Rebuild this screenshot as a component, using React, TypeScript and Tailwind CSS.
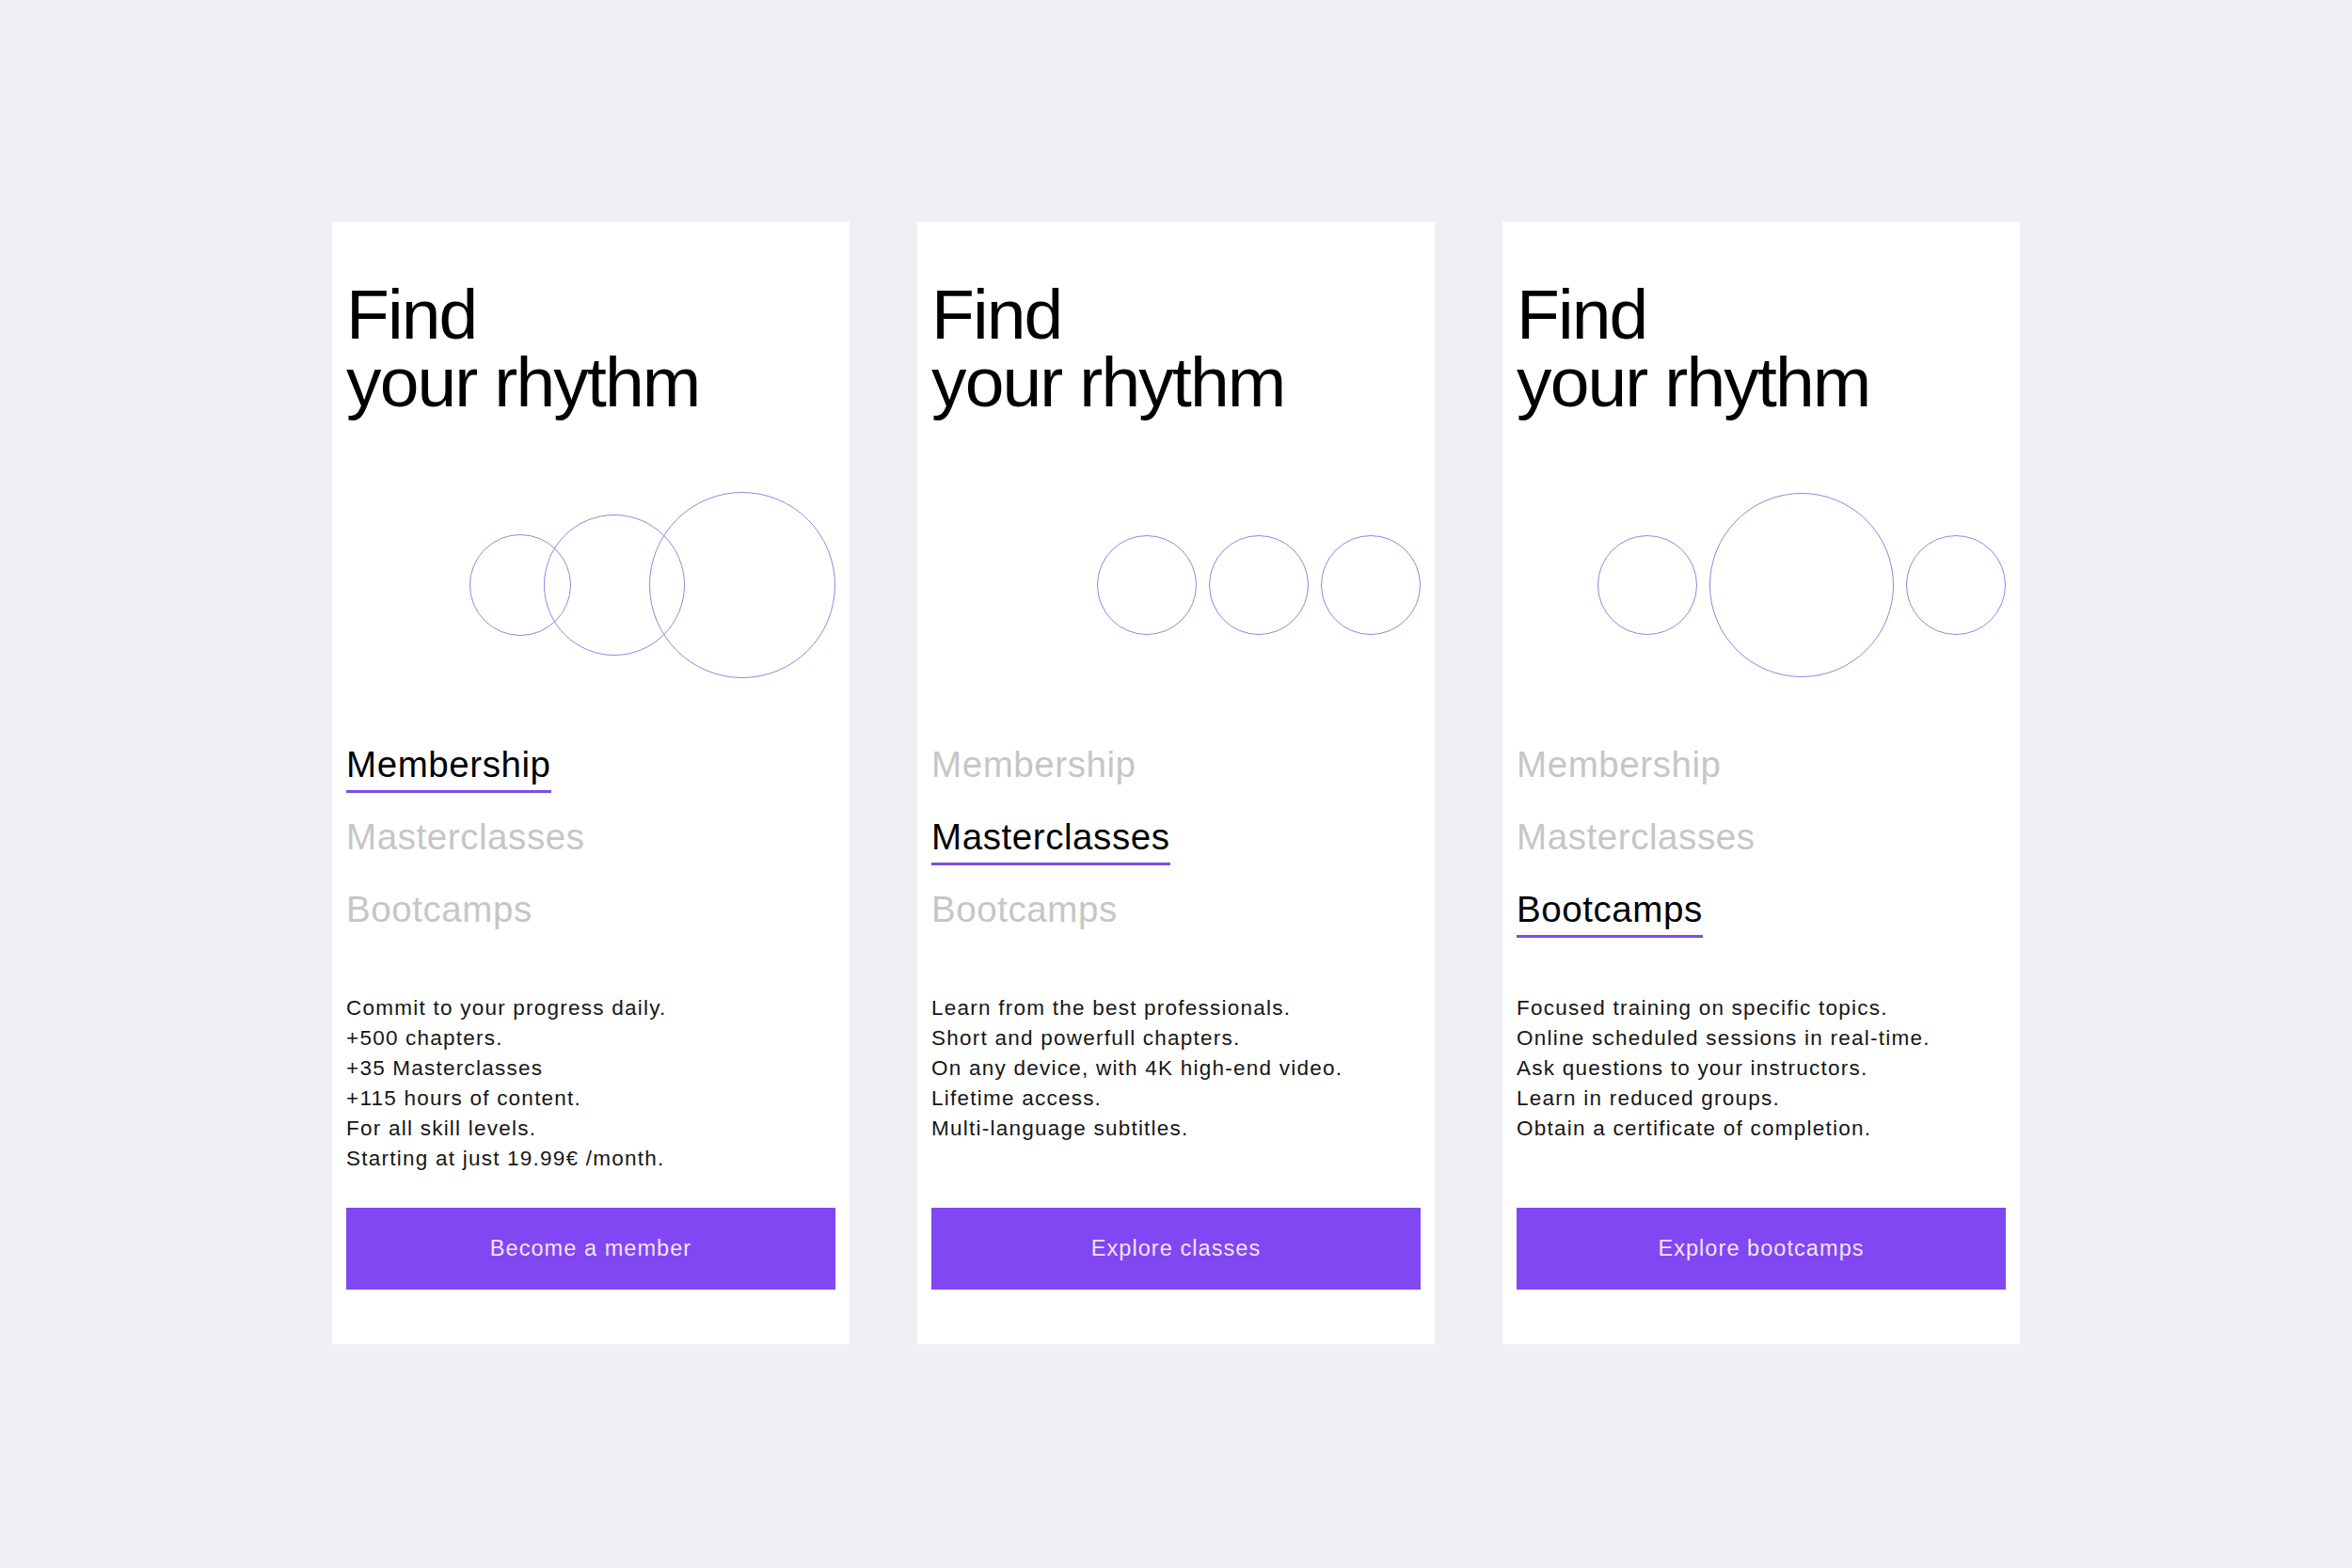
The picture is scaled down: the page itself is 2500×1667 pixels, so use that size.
import React from 'react';

type Plan = {
  id: string;
  active: number;
  lines: string[];
  cta: string;
};

const tabs = ['Membership', 'Masterclasses', 'Bootcamps'];

const plans: Plan[] = [
  {
    id: 'membership',
    active: 0,
    lines: [
      'Commit to your progress daily.',
      '+500 chapters.',
      '+35 Masterclasses',
      '+115 hours of content.',
      'For all skill levels.',
      'Starting at just 19.99€ /month.',
    ],
    cta: 'Become a member',
  },
  {
    id: 'masterclasses',
    active: 1,
    lines: [
      'Learn from the best professionals.',
      'Short and powerfull chapters.',
      'On any device, with 4K high-end video.',
      'Lifetime access.',
      'Multi-language subtitles.',
    ],
    cta: 'Explore classes',
  },
  {
    id: 'bootcamps',
    active: 2,
    lines: [
      'Focused training on specific topics.',
      'Online scheduled sessions in real-time.',
      'Ask questions to your instructors.',
      'Learn in reduced groups.',
      'Obtain a certificate of completion.',
    ],
    cta: 'Explore bootcamps',
  },
];

const ring = 'shrink-0 rounded-full border-[1.75px] border-[#9684df]';

function Circles({ variant }: { variant: number }) {
  // three little compositions, one per plan
  if (variant === 0) {
    return (
      <div className="flex h-[200px] items-center justify-end">
        <div className={`${ring} h-[108px] w-[108px]`} />
        <div className={`${ring} -ml-[29px] h-[150px] w-[150px]`} />
        <div className={`${ring} -ml-[38px] h-[198px] w-[198px]`} />
      </div>
    );
  }
  if (variant === 1) {
    return (
      <div className="flex h-[200px] items-center justify-end gap-[13px]">
        <div className={`${ring} h-[106px] w-[106px]`} />
        <div className={`${ring} h-[106px] w-[106px]`} />
        <div className={`${ring} h-[106px] w-[106px]`} />
      </div>
    );
  }
  return (
    <div className="flex h-[200px] items-center justify-end gap-[13px]">
      <div className={`${ring} h-[106px] w-[106px]`} />
      <div className={`${ring} h-[196px] w-[196px]`} />
      <div className={`${ring} h-[106px] w-[106px]`} />
    </div>
  );
}

function PlanCard({ plan }: { plan: Plan }) {
  return (
    <div className="flex h-[1193px] w-[550px] flex-col bg-white px-[15px] pt-[62px] pb-[58px]">
      <h1 className="text-[75px] font-normal tracking-[-0.025em] text-black">
        <span className="block h-[72px] leading-[72px]">Find</span>
        <span className="block h-[72px] leading-[72px]">your rhythm</span>
      </h1>

      <div className="mt-[80px]">
        <Circles variant={plan.active} />
      </div>

      <div className="mt-[69px] flex flex-col items-start gap-[25px]">
        {tabs.map((tab, i) => (
          <span
            key={tab}
            className={`border-b-[3px] pb-[5px] text-[38.5px] leading-[44px] tracking-[0.015em] ${
              i === plan.active
                ? 'border-[#7b4fe2] text-black'
                : 'border-transparent text-[#c6c6c6]'
            }`}
          >
            {tab}
          </span>
        ))}
      </div>

      <div className="mt-[59px] text-[22.5px] leading-[32px] tracking-[0.055em] text-[#161616]">
        {plan.lines.map((line) => (
          <div key={line}>{line}</div>
        ))}
      </div>

      <button className="mt-auto flex h-[87px] w-full items-center justify-center bg-[#8047f3] text-[23.5px] tracking-[0.045em] text-[#f3e3fb]">
        {plan.cta}
      </button>
    </div>
  );
}

export default function App() {
  return (
    <div
      className="flex h-[1667px] w-full justify-center gap-[72px] bg-[#eff0f3] pt-[236px]"
      style={{ fontFamily: '"Liberation Sans", Arial, sans-serif' }}
    >
      {plans.map((plan) => (
        <PlanCard key={plan.id} plan={plan} />
      ))}
    </div>
  );
}
